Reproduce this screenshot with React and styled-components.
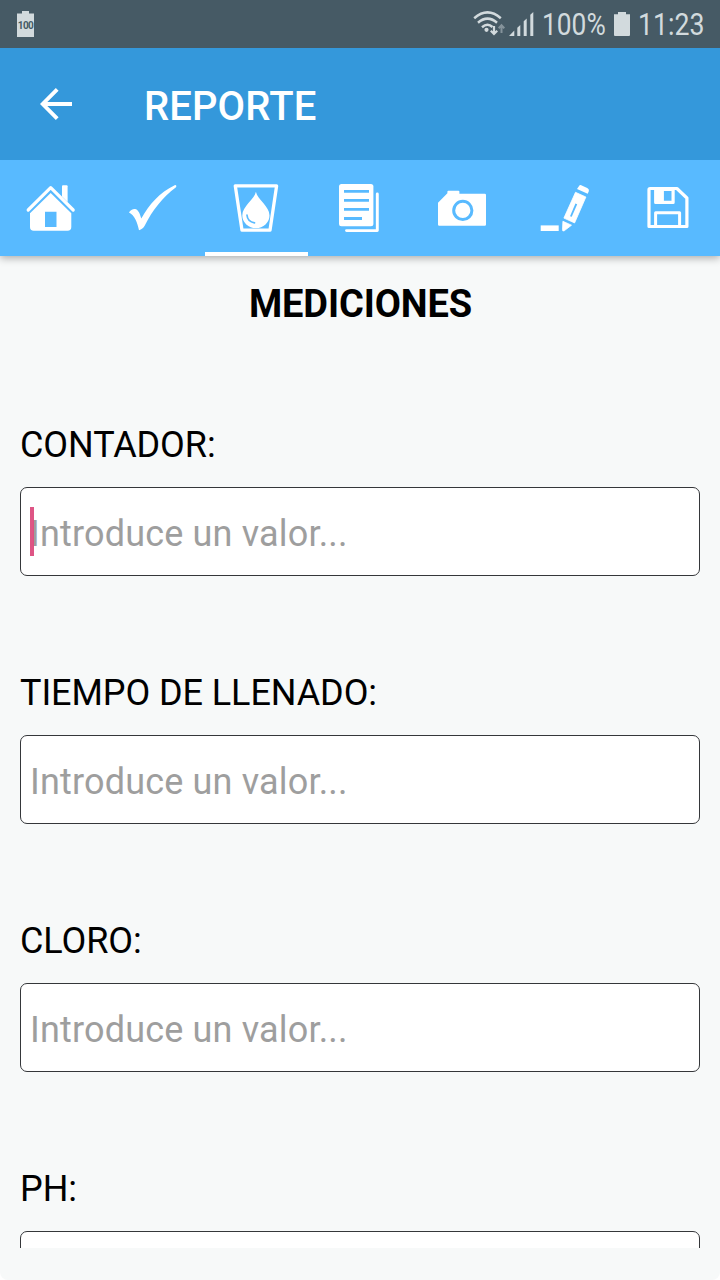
import React from 'react';
import styled, { createGlobalStyle } from 'styled-components';

const colors = {
  status: '#465a65',
  statusIcon: '#d2dadd',
  header: '#3498db',
  tabs: '#58baff',
  page: '#f7f9f9',
  placeholder: '#9e9e9e',
  cursor: '#dc4c7e',
};

const GlobalStyle = createGlobalStyle`
  * {
    box-sizing: border-box;
  }
  body {
    margin: 0;
    background-color: white;
    font-family: Roboto, "Noto Sans", sans-serif;
  }
`;

const Screen = styled.div`
  width: 720px;
  height: 1280px;
  display: flex;
  flex-direction: column;
  overflow: hidden;
  background-color: ${colors.page};
  border-radius: 0 0 8px 8px;
`;

const StatusBar = styled.div`
  height: 48px;
  flex: none;
  display: flex;
  align-items: center;
  justify-content: space-between;
  padding: 0 15px 0 17px;
  background-color: ${colors.status};
  color: ${colors.statusIcon};
`;

const StatusGroup = styled.div`
  display: flex;
  align-items: center;
  height: 48px;
`;

const StatusText = styled.div`
  width: ${props => props.$width}px;
  margin-left: ${props => props.$gap}px;
  font-size: 31px;
  line-height: 48px;
  padding-top: 1px;
  white-space: nowrap;
  transform: scaleX(${props => props.$scale});
  transform-origin: left center;
`;

const StatusIcon = styled.svg`
  display: block;
  margin-left: ${props => props.$gap || 0}px;
`;

const Header = styled.header`
  height: 112px;
  flex: none;
  display: flex;
  align-items: center;
  position: relative;
  z-index: 2;
  padding-left: 40px;
  background-color: ${colors.header};
  color: white;
`;

const HeaderTitle = styled.h1`
  margin: 6px 0 0 72px;
  font-size: 40px;
  font-weight: 500;
  line-height: 48px;
  letter-spacing: .1px;
`;

const TabBar = styled.nav`
  height: 96px;
  flex: none;
  display: grid;
  grid-template-columns: 102px repeat(6, 103px);
  position: relative;
  z-index: 1;
  background-color: ${colors.tabs};
  box-shadow: 0 2px 8px rgba(0,0,0,.32);
`;

const Tab = styled.div`
  display: flex;
  align-items: center;
  justify-content: center;
  border-top: 4px solid transparent;
  border-bottom: 4px solid ${props => (props.$active ? 'white' : 'transparent')};
`;

const TabIcon = styled.svg`
  width: 48px;
  height: 48px;
  overflow: visible;
  color: white;
`;

const Content = styled.main`
  height: 992px;
  overflow: hidden;
  padding: 0 20px;
`;

const Title = styled.h2`
  margin: 24px 0 0;
  height: 48px;
  padding-left: 1px;
  font-size: 38px;
  line-height: 48px;
  font-weight: 700;
  letter-spacing: -.1px;
  text-align: center;
`;

const Field = styled.div`
  height: 248px;
  padding-top: 93px;
`;

const Label = styled.div`
  height: 48px;
  margin-bottom: 18px;
  font-size: 36px;
  line-height: 48px;
  letter-spacing: -.08px;
  color: black;
`;

const InputBox = styled.div`
  height: 89px;
  display: flex;
  align-items: center;
  position: relative;
  padding: 5px 9px 0;
  background-color: white;
  border: 1px solid #35373a;
  border-radius: 7px;
  color: ${colors.placeholder};
  font-size: 36px;
  letter-spacing: .17px;
`;

const Cursor = styled.span`
  position: absolute;
  left: 9px;
  top: 19px;
  width: 4px;
  height: 49px;
  background-color: ${colors.cursor};
  opacity: .95;
`;

const HomeIcon = () => (
  <TabIcon viewBox="0.5 0 48 48">
    <path d="M35.500 2.200q0-1 1-1h3.600q1 0 1 1V18l-5.600-5.600z" fill="currentColor" />
    <path d="M1.700 26 24.200 3.700 46.700 26" fill="none" stroke="currentColor" strokeWidth="3.200" strokeLinecap="round" strokeLinejoin="round" />
    <path d="M24.200 8.900 44.800 29.200V43q0 3.800-3.800 3.800H7.300Q3.500 46.800 3.500 43V29.200zM18.500 27.700V43h11.500V27.700z" fill="currentColor" fillRule="evenodd" />
  </TabIcon>
);

const CheckIcon = () => (
  <TabIcon viewBox="0.5 0 48 48">
    <path d="M-.5 28.500C1 26 4 24.500 6.500 25.300 9.300 26.500 10.500 30.500 11.800 34.500 19.500 20.500 30 8.500 45.200 1.200 46.500 .8 47.500 2 46.500 3.200 32.500 14 23 26 15.300 41.500 14 44 12 45.200 9.500 46.300 8 39 5 31-.5 28.500z" fill="currentColor" />
  </TabIcon>
);

const GlassIcon = () => (
  <TabIcon viewBox="0.5 0 48 48">
    <path d="M2.800 1.900H44.100L37.500 46.200H9.500z" fill="none" stroke="currentColor" strokeWidth="3.300" strokeLinejoin="round" />
    <path d="M23.400 7.800C25 16 37 22 37 31.500A13.600 12.600 0 0 1 9.800 31.500C9.800 22 21.800 16 23.400 7.800z" fill="currentColor" />
    <path d="M14.500 31.200Q15 37.500 22 38.800" fill="none" stroke={colors.tabs} strokeWidth="1.700" strokeLinecap="round" />
  </TabIcon>
);

const DocumentIcon = () => (
  <TabIcon viewBox="0.5 0 48 48">
    <rect x="3.500" y="0" width="34.400" height="42.300" rx="2.500" fill="currentColor" />
    <path d="M8.500 7.300H33.500M8.500 16.300H33.500M8.500 25.300H33.500M8.500 34.500H26.500" stroke={colors.tabs} strokeWidth="2.800" />
    <path d="M41.800 10V46.600H11" fill="none" stroke="currentColor" strokeWidth="2.900" strokeLinecap="round" strokeLinejoin="round" />
  </TabIcon>
);

const CameraIcon = () => (
  <TabIcon viewBox="0.5 0 48 48">
    <path d="M-.5 18.800 8.900 9.200V7.700q0-1 1-1h10q1 0 1 1v2H46.300q1.200 0 1.200 1.200V40.600q0 1.200-1.200 1.200H.7q-1.200 0-1.200-1.200z" fill="currentColor" />
    <circle cx="24.300" cy="26.400" r="9.100" fill="none" stroke={colors.tabs} strokeWidth="3" />
  </TabIcon>
);

const PencilIcon = () => (
  <TabIcon viewBox="0.5 0 48 48">
    <rect x="-.800" y="41.400" width="18" height="5.600" fill="currentColor" />
    <path d="M21.400 37.300 30 41.200 22.700 46.800Q20.900 47.500 21 45.800z" fill="currentColor" stroke="currentColor" strokeWidth=".8" strokeLinejoin="round" />
    <path d="M34 8.300 44.400 13 33.100 38.900 22.400 34.100z" fill="currentColor" stroke="currentColor" strokeWidth=".8" strokeLinejoin="round" />
    <path d="M34.800 19.800 29.400 32.500" stroke={colors.tabs} strokeWidth="1.900" />
    <path d="M37.700 1.800Q38.200 .8 39.700 1.200L45.700 4Q47.800 5.200 47.400 7L46.200 9.700 35.500 4.900z" fill="currentColor" />
  </TabIcon>
);

const SaveIcon = () => (
  <TabIcon viewBox="0.5 0 48 48">
    <path d="M5.600 4.500H32.400L42.400 14V42.500H4.500V5.600q0-1.100 1.100-1.100z" fill="none" stroke="currentColor" strokeWidth="3.200" strokeLinejoin="round" />
    <path d="M9.600 3.500H30.200V18.500q0 1.500-1.500 1.500H11.100q-1.500 0-1.500-1.500zM19.400 7V16.800H27V7z" fill="currentColor" fillRule="evenodd" />
    <path d="M11.100 42.500V28.800H35.100V42.500" fill="none" stroke="currentColor" strokeWidth="3" strokeLinejoin="round" />
  </TabIcon>
);

const tabs = [
  { name: 'home', Icon: HomeIcon },
  { name: 'check', Icon: CheckIcon },
  { name: 'measures', Icon: GlassIcon, active: true },
  { name: 'notes', Icon: DocumentIcon },
  { name: 'photos', Icon: CameraIcon },
  { name: 'sign', Icon: PencilIcon },
  { name: 'save', Icon: SaveIcon },
];

const fields = [
  { label: 'CONTADOR:', placeholder: 'Introduce un valor...', focused: true },
  { label: 'TIEMPO DE LLENADO:', placeholder: 'Introduce un valor...' },
  { label: 'CLORO:', placeholder: 'Introduce un valor...' },
  { label: 'PH:' },
];

const BatteryBadge = styled.div`
  width: 17px;
  height: 26px;
  position: relative;
`;

const BatteryValue = styled.span`
  position: absolute;
  left: 0;
  top: 9px;
  width: 17px;
  font-size: 10px;
  line-height: 11px;
  font-weight: 700;
  letter-spacing: -.5px;
  text-align: center;
  color: ${colors.status};
`;

const Status = () => (
  <StatusBar>
    <BatteryBadge>
      <StatusIcon width="17" height="26" viewBox="0 0 17 26">
        <path d="M0 2.500H5V0H12V2.500H17V26H0z" fill="currentColor" />
      </StatusIcon>
      <BatteryValue>100</BatteryValue>
    </BatteryBadge>
    <StatusGroup>
      <StatusIcon width="32" height="26" viewBox="0 0 32 26" fill="none" stroke="currentColor">
        <path d="M1.200 7.200Q14.500-4.500 27.800 7.200" strokeWidth="2.500" />
        <path d="M5 11.700Q14.500 3.500 24 11.700" strokeWidth="2.500" />
        <path d="M9 16.200Q14.500 11.300 19.500 16" strokeWidth="2.500" />
        <circle cx="13.500" cy="18.800" r="2.100" fill="currentColor" stroke="none" />
        <path d="M21 15V23M17.800 19.700 21 23 24.200 19.700" strokeWidth="2.200" />
        <path d="M28.500 22V14.500M25.700 17.200 28.500 14.300 31.300 17.200" strokeWidth="2" opacity=".45" />
      </StatusIcon>
      <StatusIcon $gap={4} width="26" height="24" viewBox="0 0 26 24" fill="currentColor">
        <path d="M0 24 5.300 18.500V24zM8.300 15.700 11.300 13V24H8.300zM14.700 9.300 17.700 6.500V24H14.700zM21.300 2.700 24.300 0V24H21.300z" />
      </StatusIcon>
      <StatusText $width={64} $gap={7} $scale={0.85}>100%</StatusText>
      <StatusIcon $gap={8} width="16" height="24" viewBox="0 0 16 24">
        <path d="M0 2.200H4V0H12V2.200H16V23Q16 24 15 24H1Q0 24 0 23z" fill="currentColor" />
      </StatusIcon>
      <StatusText $width={67} $gap={8} $scale={0.86}>11:23</StatusText>
    </StatusGroup>
  </StatusBar>
);

const App = () => (
  <>
    <GlobalStyle />
    <Screen>
      <Status />
      <Header>
        <svg width="32" height="32" viewBox="0 0 32 32">
          <path d="M17.200 1.400 2.700 16 17.200 30.600M2.700 16H32" fill="none" stroke="white" strokeWidth="3.900" />
        </svg>
        <HeaderTitle>REPORTE</HeaderTitle>
      </Header>
      <TabBar>
        {tabs.map(({ name, Icon, active }) => (
          <Tab key={name} $active={active}>
            <Icon />
          </Tab>
        ))}
      </TabBar>
      <Content>
        <Title>MEDICIONES</Title>
        {fields.map(({ label, placeholder, focused }) => (
          <Field key={label}>
            <Label>{label}</Label>
            <InputBox>
              {placeholder}
              {focused && <Cursor />}
            </InputBox>
          </Field>
        ))}
      </Content>
    </Screen>
  </>
);

export default App;
